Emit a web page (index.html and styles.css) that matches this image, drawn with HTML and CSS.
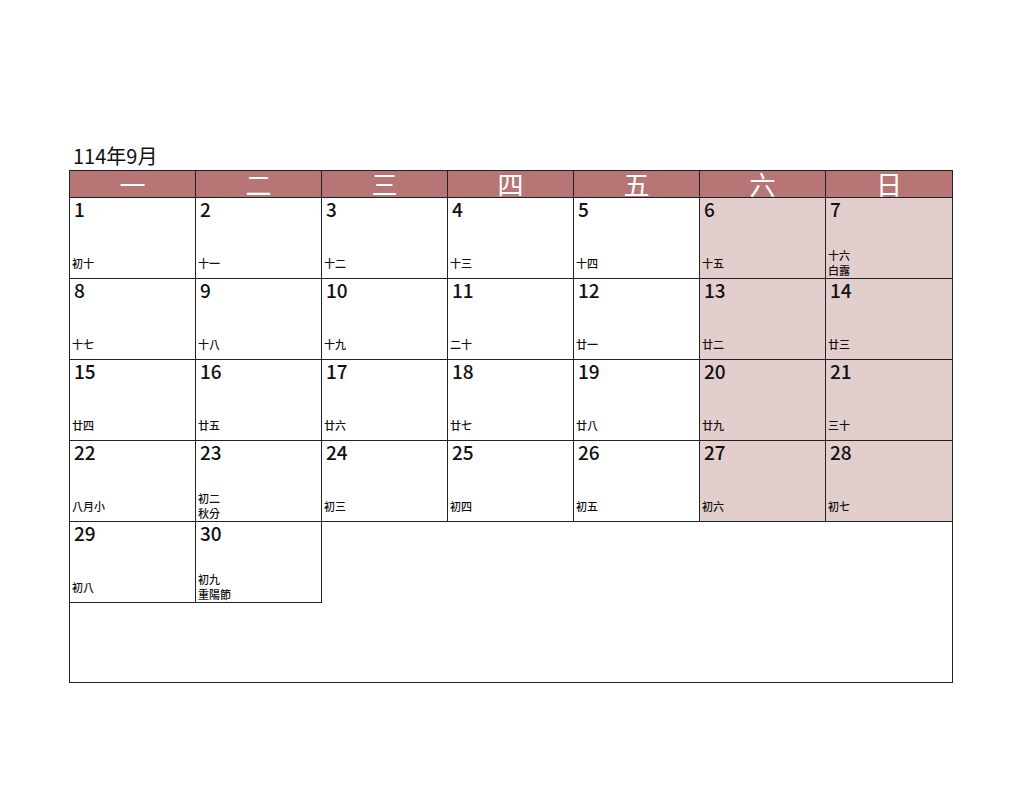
FILE: index.html
```html
<!DOCTYPE html>
<html lang="zh-Hant">
<head>
<meta charset="utf-8">
<title>114年9月</title>
<link rel="stylesheet" href="styles.css">
</head>
<body>
<div class="page">
  <div class="title">114年9月</div>
  <div class="cal">
    <div class="head">
      <div class="hcell">一</div>
      <div class="hcell">二</div>
      <div class="hcell">三</div>
      <div class="hcell">四</div>
      <div class="hcell">五</div>
      <div class="hcell">六</div>
      <div class="hcell last">日</div>
    </div>
    <div class="body">
      <div class="cell"><div class="num">1</div><div class="lunar"><span>初十</span></div></div>
      <div class="cell"><div class="num">2</div><div class="lunar"><span>十一</span></div></div>
      <div class="cell"><div class="num">3</div><div class="lunar"><span>十二</span></div></div>
      <div class="cell"><div class="num">4</div><div class="lunar"><span>十三</span></div></div>
      <div class="cell"><div class="num">5</div><div class="lunar"><span>十四</span></div></div>
      <div class="cell we"><div class="num">6</div><div class="lunar"><span>十五</span></div></div>
      <div class="cell we last"><div class="num">7</div><div class="lunar"><span>十六</span><span>白露</span></div></div>

      <div class="cell"><div class="num">8</div><div class="lunar"><span>十七</span></div></div>
      <div class="cell"><div class="num">9</div><div class="lunar"><span>十八</span></div></div>
      <div class="cell"><div class="num">10</div><div class="lunar"><span>十九</span></div></div>
      <div class="cell"><div class="num">11</div><div class="lunar"><span>二十</span></div></div>
      <div class="cell"><div class="num">12</div><div class="lunar"><span>廿一</span></div></div>
      <div class="cell we"><div class="num">13</div><div class="lunar"><span>廿二</span></div></div>
      <div class="cell we last"><div class="num">14</div><div class="lunar"><span>廿三</span></div></div>

      <div class="cell"><div class="num">15</div><div class="lunar"><span>廿四</span></div></div>
      <div class="cell"><div class="num">16</div><div class="lunar"><span>廿五</span></div></div>
      <div class="cell"><div class="num">17</div><div class="lunar"><span>廿六</span></div></div>
      <div class="cell"><div class="num">18</div><div class="lunar"><span>廿七</span></div></div>
      <div class="cell"><div class="num">19</div><div class="lunar"><span>廿八</span></div></div>
      <div class="cell we"><div class="num">20</div><div class="lunar"><span>廿九</span></div></div>
      <div class="cell we last"><div class="num">21</div><div class="lunar"><span>三十</span></div></div>

      <div class="cell"><div class="num">22</div><div class="lunar"><span>八月小</span></div></div>
      <div class="cell"><div class="num">23</div><div class="lunar"><span>初二</span><span>秋分</span></div></div>
      <div class="cell"><div class="num">24</div><div class="lunar"><span>初三</span></div></div>
      <div class="cell"><div class="num">25</div><div class="lunar"><span>初四</span></div></div>
      <div class="cell"><div class="num">26</div><div class="lunar"><span>初五</span></div></div>
      <div class="cell we"><div class="num">27</div><div class="lunar"><span>初六</span></div></div>
      <div class="cell we last"><div class="num">28</div><div class="lunar"><span>初七</span></div></div>

      <div class="cell"><div class="num">29</div><div class="lunar"><span>初八</span></div></div>
      <div class="cell"><div class="num">30</div><div class="lunar"><span>初九</span><span>重陽節</span></div></div>
    </div>
  </div>
</div>
</body>
</html>
```
FILE: styles.css
```css
html, body {
  margin: 0;
  padding: 0;
  background: #ffffff;
}
body {
  font-family: "Noto Sans CJK TC", "Noto Sans", sans-serif;
  color: #111;
}
.page {
  padding: 142px 0 0 69px;
}
.title {
  font-size: 20px;
  line-height: 28px;
  padding-left: 4px;
  color: #111;
}
.cal {
  width: 884px;
  height: 513px;
  box-sizing: border-box;
  border: 1px solid #222;
}
.head {
  display: grid;
  grid-template-columns: repeat(7, 1fr);
  height: 27px;
  box-sizing: border-box;
  border-bottom: 1px solid #222;
  background: #b87575;
}
.hcell {
  border-right: 1px solid #222;
  color: #fff;
  font-size: 26px;
  line-height: 26px;
  text-align: center;
}
.hcell.last {
  border-right: none;
}
.body {
  display: grid;
  grid-template-columns: repeat(7, 1fr);
  grid-template-rows: repeat(5, 81px);
}
.cell {
  border-right: 1px solid #222;
  border-bottom: 1px solid #222;
  display: flex;
  flex-direction: column;
  overflow: hidden;
  min-width: 0;
}
.cell.last {
  border-right: none;
}
.cell.we {
  background: #e3cece;
}
.num {
  font-size: 19px;
  font-weight: 500;
  line-height: 22px;
  padding: 0 0 0 4px;
}
.lunar {
  flex: 1;
  display: flex;
  flex-direction: column;
  justify-content: center;
  padding: 28px 0 0 2px;
  font-size: 11px;
  font-weight: 500;
  line-height: 15px;
  color: #111;
}
```
